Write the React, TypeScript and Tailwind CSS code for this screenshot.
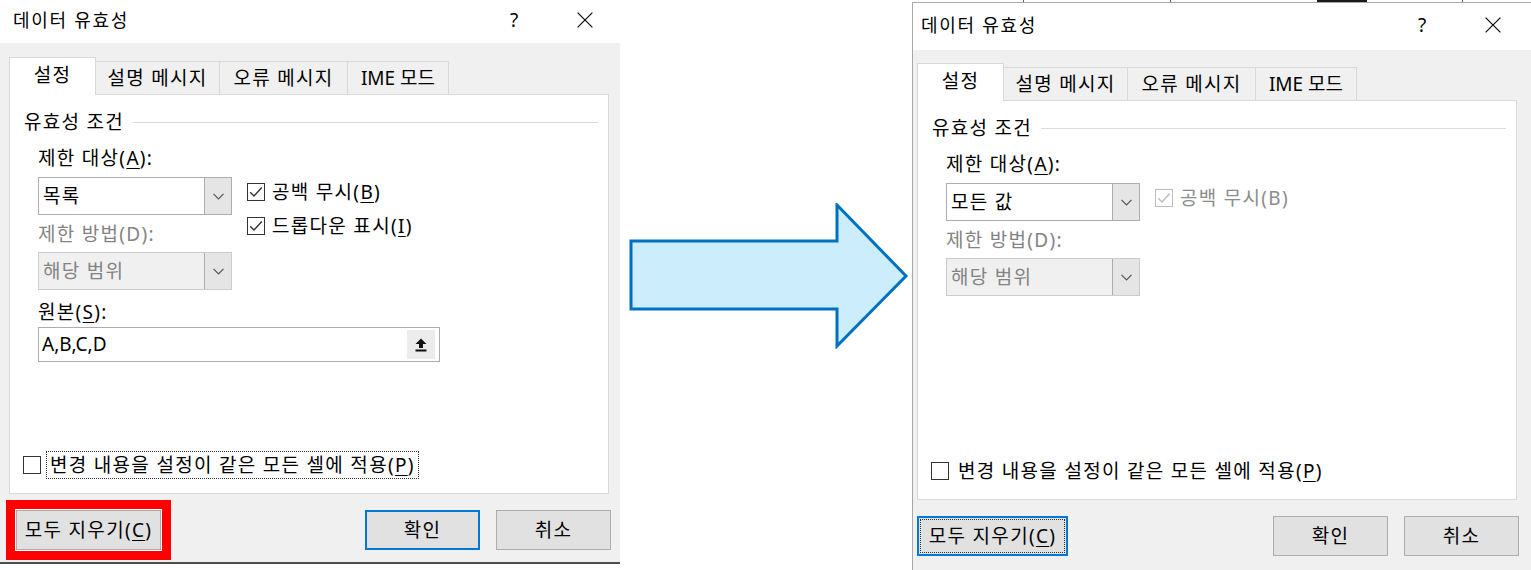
import React from "react";

type Variant = "before" | "after";

function U({ children }: { children: React.ReactNode }) {
  return <span className="underline decoration-1 underline-offset-[3px]">{children}</span>;
}

function Chevron() {
  return (
    <svg width="11" height="7" viewBox="0 0 11 7">
      <path d="M0.5 0.8 L5.5 5.8 L10.5 0.8" fill="none" stroke="#555555" strokeWidth="1.2" />
    </svg>
  );
}

function CloseIcon() {
  return (
    <svg width="16" height="16" viewBox="0 0 16 16">
      <path d="M0.6 0.6 L15.4 15.4 M15.4 0.6 L0.6 15.4" fill="none" stroke="#111111" strokeWidth="1.3" />
    </svg>
  );
}

function CheckBox({ checked, disabled }: { checked?: boolean; disabled?: boolean }) {
  const c = disabled ? "#bcbcbc" : "#333333";
  return (
    <svg width="18" height="18" viewBox="0 0 18 18" className="shrink-0">
      <rect x="0.5" y="0.5" width="17" height="17" fill="white" stroke={c} />
      {checked && <path d="M3.2 9.2 L7 13 L14.8 4.6" fill="none" stroke={c} strokeWidth="1.4" />}
    </svg>
  );
}

function Combo({ value, disabled }: { value: string; disabled?: boolean }) {
  return (
    <div
      className={`flex h-[38px] w-[194px] border ${
        disabled ? "border-[#cccccc] bg-[#f0f0f0] text-[#838383]" : "border-[#adadad] bg-white text-black"
      }`}
    >
      <div className="flex flex-1 items-center pl-[4px]">{value}</div>
      <div className="flex w-[27px] items-center justify-center border-l border-[#adadad] bg-[#e5e5e5]">
        <Chevron />
      </div>
    </div>
  );
}

function UploadIcon() {
  return (
    <svg width="12" height="14" viewBox="0 0 12 14">
      <polygon points="6,0.5 11.5,6 8,6 8,10 4,10 4,6 0.5,6" fill="#111111" />
      <rect x="0.5" y="11.5" width="11" height="2" fill="#111111" />
    </svg>
  );
}

function Arrow() {
  return (
    <svg width="280" height="146" viewBox="0 0 280 146" className="ml-[9px] mt-[203px]">
      <polygon
        points="2,38 208,38 208,2 277,73 208,143 208,106 2,106"
        fill="#ccedfb"
        stroke="#0070c0"
        strokeWidth="3"
        strokeLinejoin="miter"
      />
    </svg>
  );
}

function Dialog({ variant }: { variant: Variant }) {
  const before = variant === "before";
  return (
    <div
      className={`flex flex-col bg-[#f0f0f0] text-[19px] tracking-[1.3px] text-black ${
        before ? "h-[564px] w-[620px] border-b-2 border-[#4d4d4d]" : "flex-1 border-l border-t border-[#a8a8a8]"
      }`}
    >
      {/* title bar */}
      <div
        className={`flex items-center bg-white pb-[3px] ${
          before ? "h-[43px] pl-[13px] pr-[27px]" : "h-[47px] pl-[8px] pr-[30px]"
        }`}
      >
        <span className="flex-1 text-[18px] tracking-[1.7px]">데이터 유효성</span>
        <span className="w-[20px] text-center text-[19px] tracking-normal">?</span>
        <span className="ml-[53px] flex w-[16px] items-center">
          <CloseIcon />
        </span>
      </div>

      <div className={`flex flex-col ${before ? "mt-[14px] pl-[9px]" : "mt-[13px] pl-[4px]"}`}>
        {/* tabs */}
        <div className="flex h-[37px] items-end">
          <div className="relative z-10 -mb-px flex h-[38px] w-[87px] items-center justify-center border border-b-0 border-[#d9d9d9] bg-white pb-[2px]">
            설정
          </div>
          <div className="flex h-[33px] w-[124px] items-center justify-center border-r border-t border-[#d9d9d9] bg-[#f0f0f0]">
            설명 메시지
          </div>
          <div className="flex h-[33px] w-[128px] items-center justify-center border-r border-t border-[#d9d9d9] bg-[#f0f0f0]">
            오류 메시지
          </div>
          <div className="flex h-[33px] w-[101px] items-center justify-center border-r border-t border-[#d9d9d9] bg-[#f0f0f0] tracking-normal">
            IME 모드
          </div>
        </div>

        {/* panel */}
        <div className="flex h-[400px] w-[600px] flex-col border border-[#d9d9d9] bg-white">
          <div className="mt-[16px] flex h-[22px] items-center gap-[9px] pl-[14px] pr-[10px]">
            <span>유효성 조건</span>
            <div className="h-px flex-1 bg-[#dcdcdc]" />
          </div>

          <div className="flex flex-col pl-[28px]">
            <div className="mt-[14px] flex h-[22px] items-center">
              제한 대상(<U>A</U>):
            </div>
            <div className="mt-[8px] flex gap-[15px]">
              <div className="flex w-[194px] flex-col">
                <Combo value={before ? "목록" : "모든 값"} />
                <div className="mt-[8px] flex h-[22px] items-center text-[#838383]">제한 방법(D):</div>
                <div className="mt-[7px]">
                  <Combo value="해당 범위" disabled />
                </div>
              </div>
              <div className="flex flex-col gap-[10px] pt-[3px]">
                {before ? (
                  <>
                    <div className="flex h-[24px] items-center gap-[7px]">
                      <CheckBox checked />
                      <span>
                        공백 무시(<U>B</U>)
                      </span>
                    </div>
                    <div className="flex h-[24px] items-center gap-[7px]">
                      <CheckBox checked />
                      <span>
                        드롭다운 표시(<U>I</U>)
                      </span>
                    </div>
                  </>
                ) : (
                  <div className="flex h-[24px] items-center gap-[7px] text-[#8c8c8c]">
                    <CheckBox checked disabled />
                    <span>공백 무시(B)</span>
                  </div>
                )}
              </div>
            </div>

            {before && (
              <>
                <div className="mt-[11px] flex h-[22px] items-center">
                  원본(<U>S</U>):
                </div>
                <div className="mt-[4px] flex h-[35px] w-[402px] border border-[#adadad] bg-white">
                  <div className="flex flex-1 items-center pl-[3px] tracking-normal">A,B,C,D</div>
                  <div className="my-[1px] mr-[3px] flex w-[30px] items-center justify-center border border-white bg-[#ececec]">
                    <UploadIcon />
                  </div>
                </div>
              </>
            )}
          </div>

          <div className="mb-[14px] ml-[13px] mt-auto flex items-center gap-[5px]">
            <CheckBox />
            <span
              className={`flex h-[28px] items-center border px-[3px] ${
                before ? "border-dotted border-[#333333]" : "border-transparent"
              }`}
            >
              변경 내용을 설정이 같은 모든 셀에 적용(<U>P</U>)
            </span>
          </div>
        </div>

        {/* buttons */}
        <div className="mt-[16px] flex w-[602px] items-start">
          {before ? (
            <div className="ml-[7px] flex h-[40px] w-[145px] items-center justify-center border border-[#adadad] bg-[#e1e1e1] shadow-[0_0_0_1px_#ffffff,0_0_0_10px_#ff0000]">
              모두 지우기(<U>C</U>)
            </div>
          ) : (
            <div className="flex h-[40px] w-[151px] border-2 border-[#0078d7] bg-[#e1e1e1] p-[1px]">
              <div className="flex flex-1 items-center justify-center border border-dotted border-[#333333]">
                모두 지우기(<U>C</U>)
              </div>
            </div>
          )}
          <div className="flex-1" />
          <div
            className={`flex h-[40px] w-[115px] items-center justify-center bg-[#e1e1e1] ${
              before ? "border-2 border-[#0078d7]" : "border border-[#adadad]"
            }`}
          >
            확인
          </div>
          <div className="ml-[16px] flex h-[40px] w-[115px] items-center justify-center border border-[#adadad] bg-[#e1e1e1]">
            취소
          </div>
        </div>
      </div>
    </div>
  );
}

export default function App() {
  return (
    <div className="flex h-[570px] w-[1531px] items-start overflow-hidden bg-white font-['Noto_Sans','Noto_Sans_CJK_KR',sans-serif] leading-none">
      <Dialog variant="before" />
      <div className="flex h-[570px] w-[292px] items-start">
        <Arrow />
      </div>
      <div className="flex h-[570px] w-[619px] flex-col">
        <div className="flex h-[2px] bg-white">
          <div className="w-[111px]" />
          <div className="w-px bg-[#666666]" />
          <div className="w-[146px]" />
          <div className="w-px bg-[#666666]" />
          <div className="w-[146px]" />
          <div className="w-[50px] bg-[#1a1a1a]" />
          <div className="w-[95px]" />
          <div className="w-px bg-[#666666]" />
        </div>
        <Dialog variant="after" />
      </div>
    </div>
  );
}
